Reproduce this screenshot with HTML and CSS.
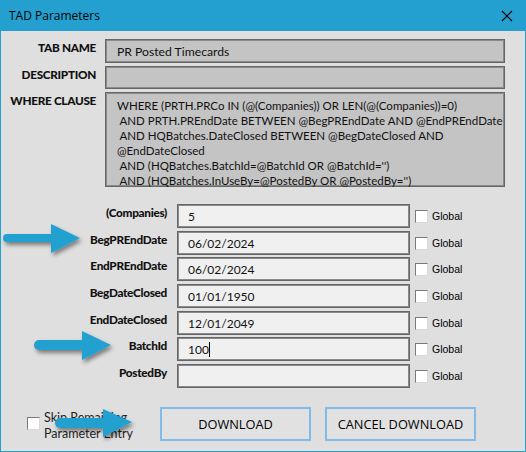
FILE: index.html
```html
<!DOCTYPE html>
<html lang="en">

<head>
    <meta charset="UTF-8">
    <meta name="viewport" content="width=device-width, initial-scale=1.0">
    <title>TAD Parameters</title>
    <link rel="stylesheet" href="styles.css">
</head>

<body>
    <div class="window">
        <header class="titlebar">
            <span class="title">TAD Parameters</span>
            <svg class="close" width="12" height="12" viewBox="0 0 12 12">
                <path d="M1 1 L11 11 M11 1 L1 11" stroke="#000" stroke-width="1.1" fill="none" />
            </svg>
        </header>

        <main class="content">
            <section class="info">
                <label class="info-label">TAB NAME</label>
                <div class="info-box tab">PR Posted Timecards</div>
                <label class="info-label">DESCRIPTION</label>
                <div class="info-box desc"></div>
                <label class="info-label">WHERE CLAUSE</label>
                <div class="info-box where">WHERE (PRTH.PRCo IN (@(Companies)) OR LEN(@(Companies))=0)
 AND PRTH.PREndDate BETWEEN @BegPREndDate AND @EndPREndDate
 AND HQBatches.DateClosed BETWEEN @BegDateClosed AND
@EndDateClosed
 AND (HQBatches.BatchId=@BatchId OR @BatchId='')
 AND (HQBatches.InUseBy=@PostedBy OR @PostedBy='')</div>
            </section>

            <section class="params">
                <label class="param-label">(Companies)</label>
                <div class="param-box">5</div>
                <span class="check"></span><span class="global">Global</span>

                <label class="param-label">BegPREndDate</label>
                <div class="param-box">06/02/2024</div>
                <span class="check"></span><span class="global">Global</span>

                <label class="param-label">EndPREndDate</label>
                <div class="param-box">06/02/2024</div>
                <span class="check"></span><span class="global">Global</span>

                <label class="param-label">BegDateClosed</label>
                <div class="param-box">01/01/1950</div>
                <span class="check"></span><span class="global">Global</span>

                <label class="param-label">EndDateClosed</label>
                <div class="param-box">12/01/2049</div>
                <span class="check"></span><span class="global">Global</span>

                <label class="param-label">BatchId</label>
                <div class="param-box">100<span class="caret"></span></div>
                <span class="check"></span><span class="global">Global</span>

                <label class="param-label">PostedBy</label>
                <div class="param-box"></div>
                <span class="check"></span><span class="global">Global</span>
            </section>

            <footer class="actions">
                <div class="skip">
                    <span class="check"></span>
                    <span class="skip-text">Skip Remaining<br>Parameter Entry</span>
                </div>
                <button class="btn download">DOWNLOAD</button>
                <button class="btn cancel">CANCEL DOWNLOAD</button>
            </footer>
        </main>

        <!-- callout arrows drawn over the dialog -->
        <svg class="arrows" width="526" height="452" viewBox="0 0 526 452">
            <defs>
                <filter id="shadow" x="-20%" y="-30%" width="150%" height="180%">
                    <feDropShadow dx="2" dy="3" stdDeviation="2" flood-color="#000" flood-opacity="0.45" />
                </filter>
            </defs>
            <g fill="#23a0d0" filter="url(#shadow)">
                <rect x="3" y="234" width="52" height="8" rx="4" />
                <polygon points="51,224 80,238 51,253" />
            </g>
            <g fill="#23a0d0" filter="url(#shadow)">
                <rect x="34" y="340" width="52" height="10" rx="5" />
                <polygon points="82,331 111,345 82,360" />
            </g>
            <g fill="#23a0d0" filter="url(#shadow)">
                <rect x="55" y="418" width="52" height="10" rx="5" />
                <polygon points="103,409 132,422 103,437" />
            </g>
        </svg>
    </div>
</body>

</html>
```

FILE: styles.css
```css
html {
    box-sizing: border-box;
    font-family: Lato, "Open Sans", sans-serif;
    font-size: 12px;
}

*,
*::before,
*::after {
    box-sizing: inherit;
}

body {
    margin: 0;
    background: #dfdfdf;
}

.window {
    position: relative;
    width: 526px;
    height: 452px;
    background: #dfdfdf;
    border: 1px solid #23a0d0;
    border-top: none;
}

.titlebar {
    height: 31px;
    margin: 0 -1px;
    background: #23a0d0;
    display: flex;
    align-items: center;
    justify-content: space-between;
    padding: 0 13px 0 9px;
}

.title {
    font-family: "Open Sans", sans-serif;
    font-size: 12px;
    color: #000;
}

.content {
    padding-top: 8px;
}

/* top block: tab name, description, where clause */
.info {
    display: grid;
    grid-template-columns: 95px 400px;
    grid-template-rows: 24px 23px 95px;
    column-gap: 9px;
    row-gap: 3px;
}

.info-label {
    text-align: right;
    font-weight: 900;
    font-size: 11.75px;
    letter-spacing: -0.3px;
    color: #111;
    padding-top: 1px;
}

.info-box {
    background: #c4c4c4;
    border: 1px solid #666;
    box-shadow: inset 0 0 0 1px #8a8a8a;
    color: #111;
    font-size: 12.2px;
}

.tab {
    padding: 4px 0 0 11px;
}

.where {
    white-space: pre;
    padding: 5px 0 0 11px;
    line-height: 15px;
    font-size: 11.5px;
}

/* parameter rows */
.params {
    margin-top: 17px;
    display: grid;
    grid-template-columns: 176px 233px 13px auto;
    grid-auto-rows: 24px;
    row-gap: 2.67px;
    align-items: start;
}

.param-label {
    text-align: right;
    font-weight: 900;
    font-size: 11.75px;
    letter-spacing: -0.3px;
    color: #111;
    margin-right: 10px;
    padding-top: 1px;
}

.param-box {
    height: 24px;
    background: #f0f0f0;
    border: 1px solid #666;
    box-shadow: inset 0 0 0 1px #8a8a8a;
    padding: 4px 0 0 10px;
    font-size: 12px;
    color: #111;
}

.caret {
    display: inline-block;
    width: 1px;
    height: 15px;
    background: #000;
    vertical-align: -3px;
}

.check {
    display: block;
    width: 13px;
    height: 13px;
    background: #fff;
    border: 1px solid #7a7a7a;
    border-right-color: #d8d8d8;
    border-bottom-color: #d8d8d8;
    margin: 6px 0 0 5px;
}

.params .global {
    margin: 6px 0 0 9px;
    font-family: "Liberation Sans", sans-serif;
    font-size: 10.5px;
    color: #000;
}

/* bottom row */
.actions {
    margin-top: 19px;
    display: flex;
    align-items: flex-start;
}

.skip {
    width: 159px;
    display: flex;
    align-items: flex-start;
    padding: 3px 0 0 26px;
}

.skip .check {
    margin: 7px 0 0 0;
}

.skip-text {
    margin-left: 4px;
    font-size: 12.5px;
    line-height: 16px;
    color: #222;
}

.btn {
    height: 34px;
    width: 151px;
    background: #e1e1e1;
    border: 2px solid #82bbea;
    font-family: "Open Sans", sans-serif;
    font-size: 12.8px;
    color: #000;
    padding: 0;
}

.cancel {
    margin-left: 14px;
}

.arrows {
    position: absolute;
    left: -1px;
    top: 0;
    pointer-events: none;
}
```
